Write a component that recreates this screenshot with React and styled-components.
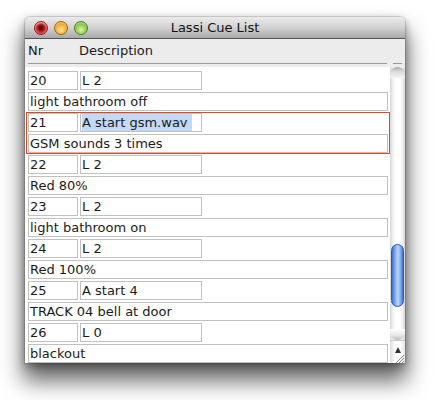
import React from 'react';
import styled, { createGlobalStyle } from 'styled-components';

const GlobalStyle = createGlobalStyle`
  html, body {
    margin: 0;
    padding: 0;
    background: #ffffff;
  }
  body {
    font-family: "DejaVu Sans", "Liberation Sans", sans-serif;
    color: #1a1a1a;
  }
`;

const Page = styled.div`
  padding: 17px 0 40px 25px;
`;

const Window = styled.div`
  width: 380px;
  height: 346px;
  display: flex;
  flex-direction: column;
  background: #ececec;
  border-radius: 5px 5px 0 0;
  box-shadow: 0 16px 22px 2px rgba(0, 0, 0, 0.6), 0 3px 8px rgba(0, 0, 0, 0.35),
    0 0 0 1px rgba(0, 0, 0, 0.12);
`;

const TitleBar = styled.div`
  position: relative;
  flex: none;
  height: 21px;
  display: flex;
  align-items: center;
  justify-content: center;
  background: linear-gradient(#ebebeb, #d2d2d2 50%, #a9a9a9);
  border-bottom: 1px solid #555;
  border-radius: 5px 5px 0 0;
  font-size: 13px;
  color: #111;
`;

const Lights = styled.div`
  position: absolute;
  left: 9px;
  top: 4px;
  display: flex;
  gap: 6px;
`;

const Light = styled.div`
  width: 14px;
  height: 14px;
  border-radius: 50%;
  box-sizing: border-box;
  border: 1px solid ${({ edge }) => edge};
  background: ${({ fill }) => fill};
  box-shadow: inset 0 1px 1px rgba(255, 255, 255, 0.6);
`;

const Header = styled.div`
  flex: none;
  height: 28px;
  box-sizing: border-box;
  padding-top: 4px;
  background: #ececec;
`;

const Labels = styled.div`
  display: flex;
  font-size: 13px;
  line-height: 16px;
  padding-left: 3px;
`;

const Label = styled.div`
  width: ${({ w }) => (w ? `${w}px` : 'auto')};
`;

const Rules = styled.div`
  display: flex;
  margin-top: 4px;
  padding-left: 3px;
`;

const Rule = styled.div`
  height: 1px;
  width: ${({ w }) => w}px;
  margin-left: ${({ ml }) => ml || 0}px;
  background: #9a9a9a;
`;

const Content = styled.div`
  flex: 1;
  display: flex;
  min-height: 0;
  background: #fff;
  overflow: hidden;
`;

const List = styled.div`
  width: 365px;
  padding: 3px 0 0 1px;
  box-sizing: border-box;
  overflow: hidden;
`;

const Cue = styled.div`
  height: 42px;
  box-sizing: border-box;
  border: 1px solid ${({ selected }) => (selected ? '#e8431c' : 'transparent')};
  padding: 0 1px;
  display: flex;
  flex-direction: column;
  gap: 2px;
`;

const CueRow = styled.div`
  display: flex;
  gap: 2px;
`;

const Field = styled.div`
  width: ${({ w }) => (w ? `${w}px` : 'auto')};
  flex: ${({ w }) => (w ? 'none' : '1')};
  height: 19px;
  box-sizing: border-box;
  border: 1px solid #c0c0c0;
  background: #fff;
  font-size: 13px;
  line-height: 17px;
  padding-left: 1px;
  white-space: nowrap;
  overflow: hidden;
`;

const Selection = styled.span`
  display: inline-block;
  height: 17px;
  padding-right: 4px;
  background: #c4d9f6;
`;

const Scroller = styled.div`
  width: 15px;
  display: flex;
  flex-direction: column;
`;

const Track = styled.div`
  flex: 1;
  display: flex;
  flex-direction: column;
  background: linear-gradient(to right, #d6d6d6, #f3f3f3 3px, #fff 6px, #fff 10px, #ececec 13px, #d3d3d3);
`;

const TrackCap = styled.div`
  height: 11px;
  border-radius: ${({ bottom }) => (bottom ? '0 0 7px 7px' : '7px 7px 0 0')};
  background: ${({ bottom }) =>
    bottom
      ? 'linear-gradient(#fff, #e6e6e6 60%, #bdbdbd)'
      : 'linear-gradient(#a9a9a9, #d9d9d9 40%, #f4f4f4)'};
  margin-top: ${({ bottom }) => (bottom ? 'auto' : '0')};
`;

const Thumb = styled.div`
  margin: 166px 1px 0;
  height: 63px;
  box-sizing: border-box;
  border-radius: 7px;
  border: 1px solid #2b58b5;
  background: linear-gradient(to right, #3d6fd0, #8fb8f2 35%, #bcd6fb 55%, #6c9ce6 85%, #3b68c9);
`;

const Corner = styled.div`
  height: 22px;
  background: linear-gradient(to right, #dcdcdc, #fff 5px, #fff 10px, #e6e6e6);
  border-top: 1px solid #c9c9c9;
`;

const cues = [
  { nr: '20', action: 'L 2', desc: 'light bathroom off' },
  { nr: '21', action: 'A start gsm.wav', desc: 'GSM sounds 3 times', selected: true },
  { nr: '22', action: 'L 2', desc: 'Red 80%' },
  { nr: '23', action: 'L 2', desc: 'light bathroom on' },
  { nr: '24', action: 'L 2', desc: 'Red 100%' },
  { nr: '25', action: 'A start 4', desc: 'TRACK 04 bell at door' },
  { nr: '26', action: 'L 0', desc: 'blackout' },
];

export default function App() {
  return (
    <Page>
      <GlobalStyle />
      <Window>
        <TitleBar>
          <Lights>
            <Light edge="#8e1c1c" fill="radial-gradient(circle, #6d0b0b 0 2px, #c92a2a 4px, #f17a7a 7px)" />
            <Light edge="#a2620c" fill="radial-gradient(circle at 50% 65%, #ffe9a6, #f4ab2c 55%, #c47a10)" />
            <Light edge="#4d7d1e" fill="radial-gradient(circle at 50% 65%, #dcf6a8, #8cc94a 55%, #5a9a26)" />
          </Lights>
          Lassi Cue List
        </TitleBar>
        <Header>
          <Labels>
            <Label w={51}>Nr</Label>
            <Label>Description</Label>
          </Labels>
          <Rules>
            <Rule w={359} />
            <Rule w={9} ml={6} />
          </Rules>
        </Header>
        <Content>
          <List>
            {cues.map((c) => (
              <Cue key={c.nr} selected={c.selected}>
                <CueRow>
                  <Field w={50}>{c.nr}</Field>
                  <Field w={122}>
                    {c.selected ? <Selection>{c.action}</Selection> : c.action}
                  </Field>
                </CueRow>
                <Field>{c.desc}</Field>
              </Cue>
            ))}
          </List>
          <Scroller>
            <Track>
              <TrackCap />
              <Thumb />
              <TrackCap bottom />
            </Track>
            <Corner>
              <svg width="15" height="22" viewBox="0 0 15 22">
                <path d="M5 12 L8 6 L11 12 Z" fill="#333" />
                <path d="M14 14 L6 22 M14 17 L9 22 M14 20 L12 22" stroke="#888" strokeWidth="1" />
              </svg>
            </Corner>
          </Scroller>
        </Content>
      </Window>
    </Page>
  );
}
